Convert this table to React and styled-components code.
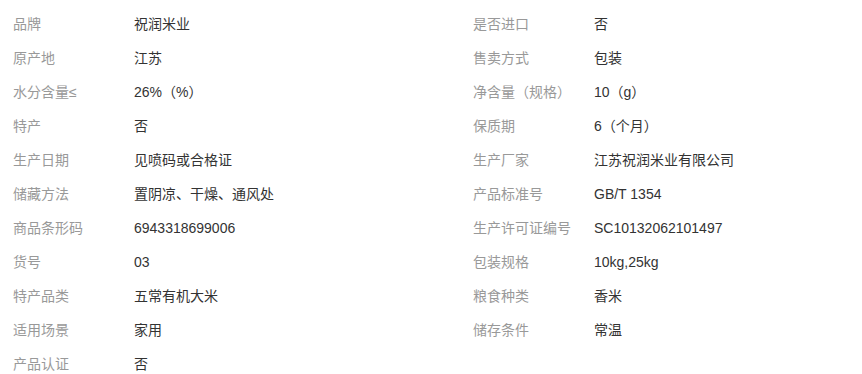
import React from 'react'
import styled, { createGlobalStyle } from 'styled-components'

const GlobalStyle = createGlobalStyle`
  body {
    margin: 0;
    background: #fff;
    font-family: "Liberation Sans", Arial, "Noto Sans CJK SC", sans-serif;
  }
`

const specs = [
  ['品牌', '祝润米业', '是否进口', '否'],
  ['原产地', '江苏', '售卖方式', '包装'],
  ['水分含量≤', '26%（%）', '净含量（规格）', '10（g）'],
  ['特产', '否', '保质期', '6（个月）'],
  ['生产日期', '见喷码或合格证', '生产厂家', '江苏祝润米业有限公司'],
  ['储藏方法', '置阴凉、干燥、通风处', '产品标准号', 'GB/T 1354'],
  ['商品条形码', '6943318699006', '生产许可证编号', 'SC10132062101497'],
  ['货号', '03', '包装规格', '10kg,25kg'],
  ['特产品类', '五常有机大米', '粮食种类', '香米'],
  ['适用场景', '家用', '储存条件', '常温'],
  ['产品认证', '否'],
]

const Table = styled.div`
  box-sizing: border-box;
  display: grid;
  grid-template-columns: 460px 1fr;
  grid-auto-rows: 34px;
  padding: 7px 0 0 13px;
  width: 862px;
  height: 374px;
  overflow: hidden;
`

const Cell = styled.div`
  display: flex;
  align-items: center;
  font-size: 14px;
  line-height: 18px;
`

const Label = styled.span`
  width: 121px;
  flex-shrink: 0;
  color: #999;
`

const Value = styled.span`
  color: #333;
`

const Spec = ({ label, value }) => (
  <Cell>
    <Label>{label}</Label>
    <Value>{value}</Value>
  </Cell>
)

export default function App() {
  return (
    <>
      <GlobalStyle />
      <Table>
        {specs.map((row, i) => (
          <React.Fragment key={i}>
            <Spec label={row[0]} value={row[1]} />
            {row[2] ? <Spec label={row[2]} value={row[3]} /> : <Cell />}
          </React.Fragment>
        ))}
      </Table>
    </>
  )
}
